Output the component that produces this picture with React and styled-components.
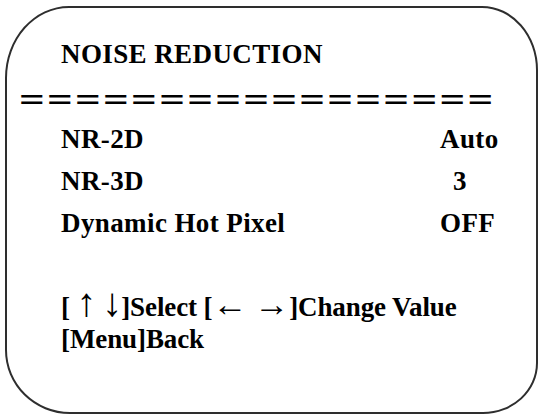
import styled, { createGlobalStyle } from "styled-components";

const GlobalStyle = createGlobalStyle`
    html, body {
        margin: 0;
        padding: 0;
        background: #ffffff;
    }
    body {
        font-family: "Liberation Serif", "Times New Roman", serif;
        color: #000000;
    }
`;

const Frame = styled.div`
    box-sizing: border-box;
    width: 533px;
    height: 408px;
    margin: 6px 0 0 5px;
    padding: 25px 0 0 54px;
    border: 2px solid #2e2e2e;
    border-radius: 64px 56px 55px 65px / 72px 64px 51px 64px;
    display: flex;
    flex-direction: column;
    font-size: 27px;
    font-weight: bold;
    letter-spacing: 0.4px;
`;

const Title = styled.div`
    line-height: 42px;
    white-space: nowrap;
`;

const Rule = styled.div`
    height: 43px;
    margin-left: -42px;
    white-space: nowrap;
`;

const RuleText = styled.span`
    display: inline-block;
    font-size: 34px;
    line-height: 50px;
    letter-spacing: 1.7px;
    transform: scaleX(1.33);
    transform-origin: left center;
`;

const Row = styled.div`
    display: grid;
    grid-template-columns: 379px auto;
    line-height: 42px;
    white-space: nowrap;
`;

const Value = styled.span`
    padding-left: ${(p) => p.indent || 0}px;
`;

const Hint = styled.div`
    line-height: 32px;
    letter-spacing: -0.1px;
    white-space: nowrap;
    margin-top: ${(p) => p.gap || 0}px;
`;

const Arrow = styled.span`
    font-weight: normal;
    line-height: 0;
    font-size: ${(p) => (p.vertical ? "40px" : "35px")};
    letter-spacing: ${(p) => (p.vertical ? "-1px" : "0")};
`;

const rows = [
    { label: "NR-2D", value: "Auto" },
    { label: "NR-3D", value: "3", indent: 13 },
    { label: "Dynamic Hot Pixel", value: "OFF" },
];

export default function App() {
    return (
        <>
            <GlobalStyle />
            <Frame>
                <Title>NOISE REDUCTION</Title>
                <Rule>
                    <RuleText>{"=".repeat(17)}</RuleText>
                </Rule>
                {rows.map((row) => (
                    <Row key={row.label}>
                        <span>{row.label}</span>
                        <Value indent={row.indent}>{row.value}</Value>
                    </Row>
                ))}
                <Hint gap={47}>
                    [ <Arrow vertical>↑</Arrow> <Arrow vertical>↓</Arrow>]Select [
                    <Arrow>←</Arrow> <Arrow>→</Arrow>]Change Value
                </Hint>
                <Hint>[Menu]Back</Hint>
            </Frame>
        </>
    );
}
